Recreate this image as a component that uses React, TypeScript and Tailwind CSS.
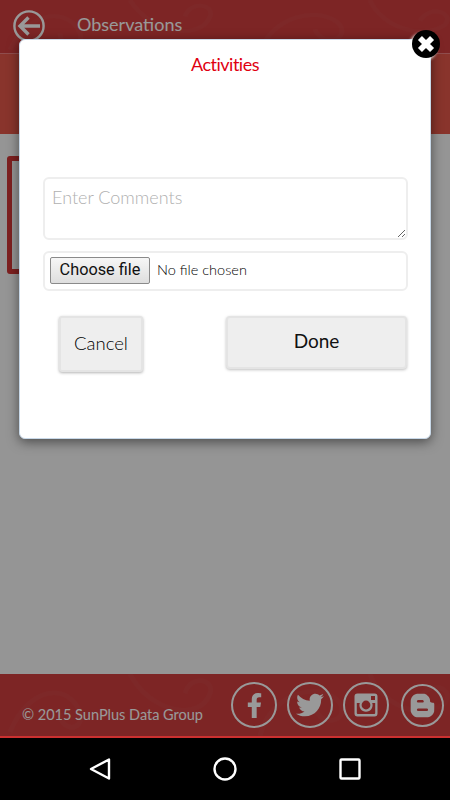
import { FaBloggerB, FaFacebookF, FaTwitter } from "react-icons/fa";

// faint swirl texture used in the header and footer bars
function Swirls() {
  return (
    <svg className="absolute inset-0 w-full h-full" viewBox="0 0 450 64" preserveAspectRatio="none" fill="none" stroke="#ffffff" strokeOpacity="0.025" strokeWidth="5">
      <path d="M10 60 C30 10 70 10 80 40 C85 60 60 60 60 40" />
      <path d="M130 0 C150 40 200 50 210 20 C215 5 190 0 185 20" />
      <path d="M260 64 C270 20 320 5 340 30 C350 50 320 55 315 35" />
      <path d="M370 0 C380 30 420 50 445 30 C455 15 430 5 420 25" />
    </svg>
  );
}

function BackIcon() {
  return (
    <svg viewBox="0 0 32 32" className="w-[32px] h-[32px]" fill="none" stroke="#ffffff" strokeWidth="2.4">
      <circle cx="16" cy="16" r="14.6" />
      <path d="M27 16H7M15.5 7.5L7 16l8.5 8.5" strokeWidth="3.4" />
    </svg>
  );
}

function InstagramIcon() {
  return (
    <svg viewBox="0 0 24 24" className="w-[24px] h-[24px]" fill="#ffffff">
      <path
        fillRule="evenodd"
        d="M3.5 0.5h17a3 3 0 0 1 3 3v17a3 3 0 0 1-3 3h-17a3 3 0 0 1-3-3v-17a3 3 0 0 1 3-3zM17 3v4h4V3zM2.8 10v10a1 1 0 0 0 1 1h16.4a1 1 0 0 0 1-1V10h-3a6.6 6.6 0 1 1-12.4 0zM12 7.6a4.4 4.4 0 1 0 0 8.8 4.4 4.4 0 0 0 0-8.8z"
      />
    </svg>
  );
}

function SocialCircle({ size, children }: { size: string; children: React.ReactNode }) {
  return (
    <div className={`${size} rounded-full border-2 border-white flex items-center justify-center text-white shrink-0`}>
      {children}
    </div>
  );
}

export default function App() {
  return (
    <div className="relative w-[450px] h-[800px] overflow-hidden flex flex-col bg-black font-['Lato',sans-serif]">
      {/* page behind the dialog */}
      <div className="relative h-[54px] bg-[#d03f3f] border-b border-[#f08080] flex items-center pl-[13px] pb-[1px] shrink-0">
        <Swirls />
        <BackIcon />
        <span className="ml-[32px] mt-[-3px] text-[18px] text-white">Observations</span>
      </div>
      <div className="h-[80px] bg-[#e4584a] shrink-0" />
      <div className="flex-1 bg-[#f9f9f9] pt-[22px] pl-[7px]">
        <div className="w-[100px] h-[118px] border-[5px] border-[#d03636] rounded-[3px]" />
      </div>
      <div className="relative h-[64px] bg-[#d03f3f] border-b-2 border-[#cc3030] flex items-center shrink-0">
        <Swirls />
        <span className="absolute left-[22px] top-[31px] text-[14.5px] leading-[20px] text-white">© 2015 SunPlus Data Group</span>
        <div className="absolute left-[231px] top-[8px] flex items-center">
          <SocialCircle size="w-[46px] h-[46px]">
            <FaFacebookF size={25} />
          </SocialCircle>
          <div className="ml-[10px]">
            <SocialCircle size="w-[46px] h-[46px]">
              <FaTwitter size={28} />
            </SocialCircle>
          </div>
          <div className="ml-[10px]">
            <SocialCircle size="w-[46px] h-[46px]">
              <InstagramIcon />
            </SocialCircle>
          </div>
          <div className="ml-[12px]">
            <SocialCircle size="w-[43px] h-[43px]">
              <FaBloggerB size={27} />
            </SocialCircle>
          </div>
        </div>
      </div>

      {/* android nav bar */}
      <div className="h-[62px] bg-black flex items-center justify-center shrink-0 pb-[1px]">
        <svg width="450" height="40" viewBox="0 0 450 40" fill="none" stroke="#ffffff" strokeWidth="2.4" strokeLinejoin="round">
          <path d="M109 10.5V29.5L91 20z" />
          <circle cx="225" cy="20" r="10.5" />
          <rect x="340.5" y="10.5" width="19" height="19" rx="1" />
        </svg>
      </div>

      {/* dimmed overlay */}
      <div className="absolute left-0 top-0 w-full h-[736px] bg-black/40" />

      {/* dialog */}
      <div className="absolute left-[19px] top-[39px] w-[412px] h-[400px] bg-white rounded-[6px] border border-[#c8d8e8] shadow-[0_3px_12px_rgba(0,0,0,0.5)] flex flex-col px-[23px]">
        <h2 className="mt-[11px] text-center text-[18px] leading-[26px] tracking-[-0.5px] text-[#e00010]">Activities</h2>
        <textarea
          placeholder="Enter Comments"
          className="mt-[100px] w-[365px] h-[63px] px-[7px] py-[4px] text-[18px] leading-[28px] font-light placeholder:text-[#b0b0b0] bg-white rounded-[6px] border-2 border-[#eeeeee] outline-none"
        />
        <div className="mt-[11px] w-[365px] h-[40px] bg-white rounded-[6px] border-2 border-[#eeeeee] flex items-center pl-[5px]">
          <button className="w-[100px] h-[27px] mt-[-2px] bg-gradient-to-b from-[#f6f6f6] to-[#dedede] border border-[#8a8a8a] rounded-[2px] text-[16.3px] leading-[22px] pb-[1px] text-[#111111] font-['Roboto',sans-serif]">
            Choose file
          </button>
          <span className="ml-[7px] mt-[-3px] text-[14.5px] font-light text-black">No file chosen</span>
        </div>
        <div className="mt-[25px] flex items-start pl-[16px]">
          <button className="w-[84px] h-[56px] bg-[#eeeeee] rounded-[3px] border-2 border-[#e4e4e4] shadow-[0_1px_3px_rgba(0,0,0,0.3)] text-[18.5px] leading-[24px] pb-[2px] font-light text-black">
            Cancel
          </button>
          <button className="ml-[83px] w-[181px] h-[53px] bg-[#eeeeee] rounded-[4px] border-2 border-[#e4e4e4] shadow-[0_1px_3px_rgba(0,0,0,0.25)] text-[19px] leading-[24px] pb-[3px] text-[#111111]">
            Done
          </button>
        </div>

        {/* close badge */}
        <div className="absolute right-[-10px] top-[-10px] w-[28px] h-[28px] rounded-full bg-black shadow-[-3px_3px_3px_rgba(255,255,255,0.95)] flex items-center justify-center">
          <svg viewBox="0 0 20 20" className="w-[22px] h-[22px]" stroke="#ffffff" strokeWidth="5.2">
            <path d="M4.5 4.5l11 11M15.5 4.5l-11 11" />
          </svg>
        </div>
      </div>
    </div>
  );
}
